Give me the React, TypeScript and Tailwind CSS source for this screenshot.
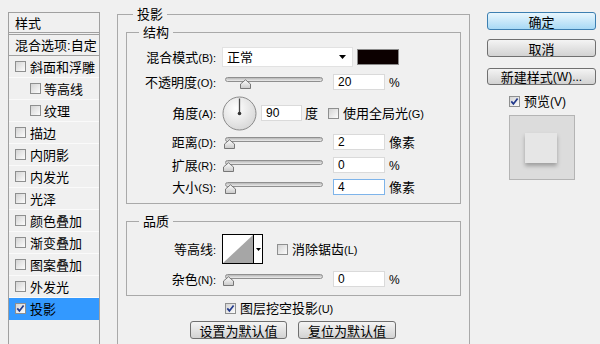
import type { ReactNode } from "react";

const latin = "font-['Liberation_Sans',Arial,sans-serif]";

function Box({ checked = false }: { checked?: boolean }) {
  return (
    <span className="inline-flex h-[11px] w-[11px] shrink-0 items-center justify-center border border-[#8e8f8f] bg-gradient-to-br from-[#d4d4d4] to-[#fcfcfc]">
      {checked && (
        <svg width="9" height="9" viewBox="0 0 9 9">
          <path d="M1.3 4.4 L3.4 6.9 L7.6 1.4" fill="none" stroke="#21398c" strokeWidth="1.7" />
        </svg>
      )}
    </span>
  );
}

function Label({ zh, key2 }: { zh: string; key2?: string }) {
  return (
    <span className="w-[89px] shrink-0 text-right text-[13px] leading-[16px] whitespace-nowrap">
      {zh}
      <span className={`${latin} text-[11px]`}>{key2}</span>
    </span>
  );
}

function Slider({ pos }: { pos: number }) {
  return (
    <div className="relative ml-[9px] h-[16px] w-[98px] shrink-0">
      <div className="absolute left-0 right-0 top-[3px] h-[5px] rounded-full border border-[#8f8f8f] bg-gradient-to-b from-[#b8b8b8] to-[#ececec]" />
      <svg className="absolute top-[5px]" style={{ left: pos }} width="11" height="10" viewBox="0 0 11 10">
        <defs>
          <linearGradient id="th" x1="0" y1="0" x2="0" y2="1">
            <stop offset="0" stopColor="#ffffff" />
            <stop offset="1" stopColor="#c9c9c9" />
          </linearGradient>
        </defs>
        <path d="M0.5 9.5 V5 L5.5 0.8 L10.5 5 V9.5 Z" fill="url(#th)" stroke="#777" />
      </svg>
    </div>
  );
}

function Field({ value, focus = false, w = "w-[52px]" }: { value: string; focus?: boolean; w?: string }) {
  return (
    <div
      className={`${w} h-[16px] shrink-0 border bg-white pl-[4px] text-[12px] leading-[14px] ${latin} ${
        focus ? "border-[#7eb4ea]" : "border-[#dadada]"
      }`}
    >
      {value}
    </div>
  );
}

function Unit({ children }: { children: ReactNode }) {
  return <span className="ml-[4px] text-[13px] leading-[16px]">{children}</span>;
}

function Btn({ children, primary = false, className = "" }: { children: ReactNode; primary?: boolean; className?: string }) {
  return (
    <div
      className={`flex items-center justify-center rounded-[3px] border text-[13px] leading-none ${
        primary
          ? "border-[#3c7fb1] bg-gradient-to-b from-[#e8f6fd] to-[#a7d9f5]"
          : "border-[#707070] bg-gradient-to-b from-[#f4f4f4] to-[#d2d2d2]"
      } ${className}`}
    >
      {children}
    </div>
  );
}

const items: { name: string; sub?: boolean; on?: boolean }[] = [
  { name: "斜面和浮雕" },
  { name: "等高线", sub: true },
  { name: "纹理", sub: true },
  { name: "描边" },
  { name: "内阴影" },
  { name: "内发光" },
  { name: "光泽" },
  { name: "颜色叠加" },
  { name: "渐变叠加" },
  { name: "图案叠加" },
  { name: "外发光" },
  { name: "投影", on: true },
];

export default function App() {
  return (
    <div className="flex h-[344px] w-[600px] items-start overflow-hidden bg-[#f0f0f0] text-black font-['Noto_Sans_CJK_SC','Noto_Sans',sans-serif]">
      {/* style list */}
      <div className="ml-[8px] mt-[12px] h-[340px] w-[92px] shrink-0 border border-[#a0a0a0]">
        <div className="h-[22px] border-b-[3px] border-double border-[#a0a0a0] pl-[6px] text-[13px] leading-[19px]">样式</div>
        <div className="h-[21px] border-b border-[#a0a0a0] pl-[6px] text-[13px] leading-[20px]">
          混合选项<span className={latin}>:</span>自定
        </div>
        {items.map((it) => (
          <div
            key={it.name}
            className={`flex h-[22px] items-center border-b text-[13px] ${it.sub ? "pl-[21px]" : "pl-[6px]"} ${
              it.on ? "border-[#3399ff] bg-[#3399ff]" : "border-[#fafafa]"
            }`}
          >
            <Box checked={it.on} />
            <span className={it.sub ? "ml-[3px]" : "ml-[4px]"}>{it.name}</span>
          </div>
        ))}
      </div>

      {/* main */}
      <fieldset className="m-0 ml-[17px] mt-[5px] h-[400px] w-[353px] shrink-0 border border-[#a9a9a9] p-0">
        <legend className="ml-[15px] px-[4px] text-[13px] leading-[18px]">投影</legend>
        <div className="flex flex-col px-[8px] pt-0">
          <fieldset className="m-0 w-[335px] border border-[#a9a9a9] p-0">
            <legend className="ml-[12px] px-[4px] text-[13px] leading-[18px]">结构</legend>
            <div className="flex flex-col pb-[8px]">
              <div className="mt-[6px] flex h-[20px] items-center">
                <Label zh="混合模式" key2="(B):" />
                <div className="ml-[6px] flex h-[20px] w-[131px] items-center justify-between border border-[#e2e2e2] bg-white pl-[4px] pr-[6px] text-[13px]">
                  正常
                  <svg width="7" height="4" viewBox="0 0 7 4">
                    <path d="M0 0 H7 L3.5 4 Z" fill="#000" />
                  </svg>
                </div>
                <div className="ml-[4px] h-[16px] w-[42px] border border-[#8a8a8a] bg-[#0c0000]" />
              </div>
              <div className="mt-[7px] flex h-[16px] items-center">
                <Label zh="不透明度" key2="(O):" />
                <Slider pos={15} />
                <div className="ml-[10px]">
                  <Field value="20" />
                </div>
                <Unit>
                  <span className={`${latin} text-[12px]`}>%</span>
                </Unit>
              </div>
              <div className="mt-[6px] flex h-[34px] items-center">
                <Label zh="角度" key2="(A):" />
                <svg className="ml-[6px]" width="35" height="35" viewBox="0 0 35 35">
                  <defs>
                    <radialGradient id="dial" cx="0.4" cy="0.35" r="0.7">
                      <stop offset="0" stopColor="#ffffff" />
                      <stop offset="1" stopColor="#d6d6d6" />
                    </radialGradient>
                  </defs>
                  <circle cx="17.5" cy="17.5" r="16.5" fill="url(#dial)" stroke="#8a8a8a" />
                  <line x1="17.5" y1="17.5" x2="17.5" y2="2.5" stroke="#4a4a4a" strokeWidth="1.3" />
                  <circle cx="17.5" cy="17.5" r="1.8" fill="#333" />
                </svg>
                <div className="ml-[4px]">
                  <Field value="90" w="w-[41px]" />
                </div>
                <span className="ml-[3px] text-[13px]">度</span>
                <span className="ml-[10px] flex items-center">
                  <Box />
                </span>
                <span className="ml-[4px] text-[13px] whitespace-nowrap">
                  使用全局光<span className={`${latin} text-[11px]`}>(G)</span>
                </span>
              </div>
              <div className="mt-[4px] flex h-[16px] items-center">
                <Label zh="距离" key2="(D):" />
                <Slider pos={-1} />
                <div className="ml-[10px]">
                  <Field value="2" />
                </div>
                <Unit>像素</Unit>
              </div>
              <div className="mt-[7px] flex h-[16px] items-center">
                <Label zh="扩展" key2="(R):" />
                <Slider pos={-2} />
                <div className="ml-[10px]">
                  <Field value="0" />
                </div>
                <Unit>
                  <span className={`${latin} text-[12px]`}>%</span>
                </Unit>
              </div>
              <div className="mt-[6px] flex h-[16px] items-center">
                <Label zh="大小" key2="(S):" />
                <Slider pos={0} />
                <div className="ml-[10px]">
                  <Field value="4" focus />
                </div>
                <Unit>像素</Unit>
              </div>
            </div>
          </fieldset>

          <fieldset className="m-0 mt-[8px] w-[335px] border border-[#a9a9a9] p-0">
            <legend className="ml-[12px] px-[4px] text-[13px] leading-[18px]">品质</legend>
            <div className="flex flex-col pb-[8px]">
              <div className="mt-[4px] flex h-[30px] items-center">
                <Label zh="等高线" key2=":" />
                <div className="ml-[6px] flex h-[30px] w-[41px] border border-black bg-white">
                  <svg width="30" height="28" viewBox="0 0 30 28">
                    <path d="M0 28 L30 0 V28 Z" fill="#a6a6a6" />
                  </svg>
                  <div className="flex w-[9px] items-center justify-center border-l border-black">
                    <svg width="5" height="3" viewBox="0 0 5 3">
                      <path d="M0 0 H5 L2.5 3 Z" fill="#000" />
                    </svg>
                  </div>
                </div>
                <span className="ml-[14px] flex items-center">
                  <Box />
                </span>
                <span className="ml-[4px] text-[13px] whitespace-nowrap">
                  消除锯齿<span className={`${latin} text-[11px]`}>(L)</span>
                </span>
              </div>
              <div className="mt-[7px] flex h-[16px] items-center">
                <Label zh="杂色" key2="(N):" />
                <Slider pos={-2} />
                <div className="ml-[10px]">
                  <Field value="0" />
                </div>
                <Unit>
                  <span className={`${latin} text-[12px]`}>%</span>
                </Unit>
              </div>
            </div>
          </fieldset>

          <div className="ml-[99px] mt-[5px] flex h-[14px] items-center">
            <Box checked />
            <span className="ml-[4px] text-[13px] whitespace-nowrap">
              图层挖空投影<span className={`${latin} text-[11px]`}>(U)</span>
            </span>
          </div>
          <div className="ml-[64px] mt-[6px] flex">
            <Btn className="h-[18px] w-[97px]">设置为默认值</Btn>
            <Btn className="ml-[11px] h-[18px] w-[98px]">复位为默认值</Btn>
          </div>
        </div>
      </fieldset>

      {/* buttons & preview */}
      <div className="ml-[17px] mt-[12px] flex w-[109px] shrink-0 flex-col">
        <Btn primary className="h-[18px]">确定</Btn>
        <Btn className="mt-[9px] h-[18px]">取消</Btn>
        <Btn className="mt-[11px] h-[17px]">
          新建样式<span className={`${latin} text-[12px]`}>(W)...</span>
        </Btn>
        <div className="ml-[22px] mt-[9px] flex h-[14px] items-center">
          <Box checked />
          <span className="ml-[4px] text-[13px] whitespace-nowrap">
            预览<span className={`${latin} text-[12px]`}>(V)</span>
          </span>
        </div>
        <div className="ml-[22px] mt-[7px] h-[65px] w-[66px] border border-[#b4b4b4] bg-[#dcdcdc] pl-[15px] pt-[17px]">
          <div className="h-[30px] w-[32px] bg-[#e6e6e6] shadow-[0_3px_4px_rgba(0,0,0,0.28)]" />
        </div>
      </div>
    </div>
  );
}
